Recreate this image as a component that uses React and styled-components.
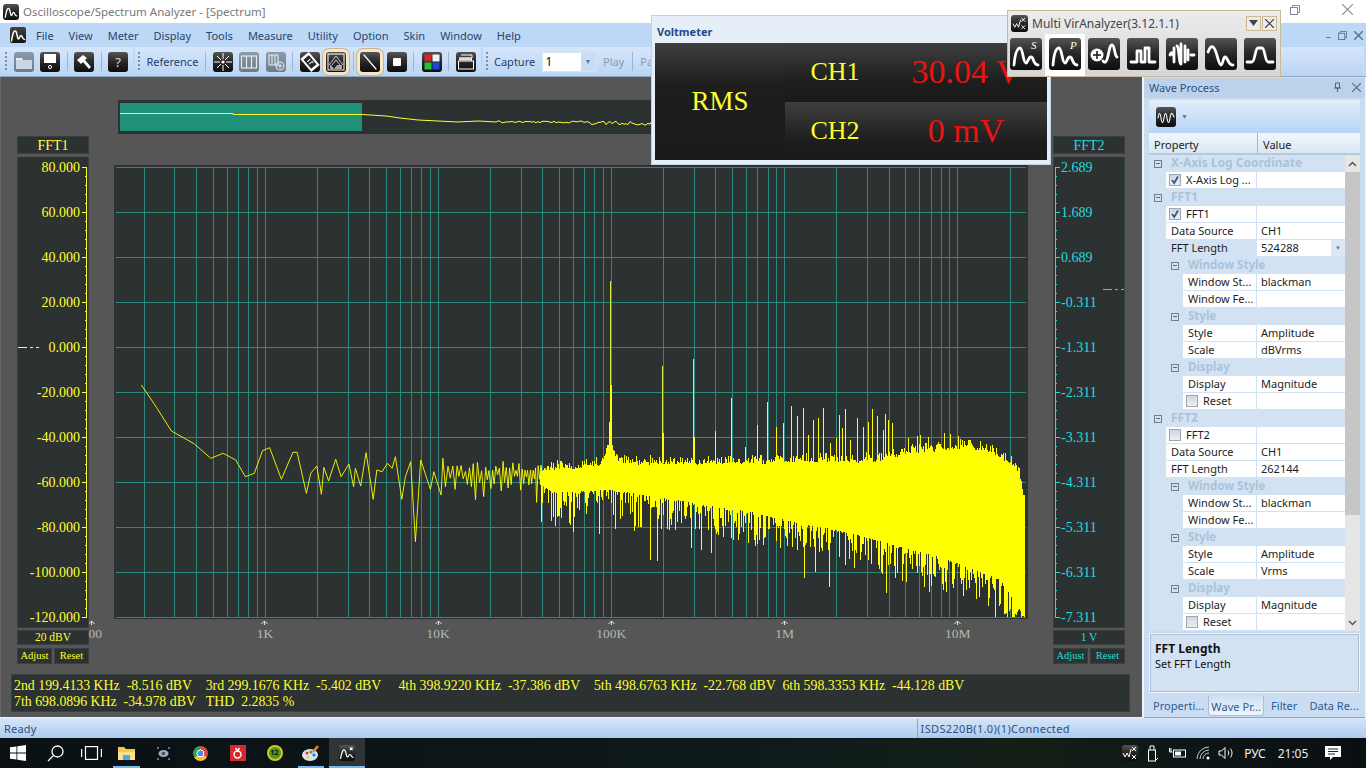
import React, { useMemo } from "react";
import styled, { createGlobalStyle } from "styled-components";

const Global = createGlobalStyle`
  html, body { margin: 0; padding: 0; background: #fff; }
  #root { width: 1366px; height: 768px; overflow: hidden; }
  * { box-sizing: border-box; }
`;

const UI = `"Noto Sans", "Liberation Sans", sans-serif`;
const SERIF = `"Liberation Serif", serif`;

/* ---------- frame ---------- */
const Page = styled.div`
  position: relative;
  width: 1366px;
  height: 768px;
  display: flex;
  flex-direction: column;
  overflow: hidden;
  font-family: ${UI};
  font-size: 11px;
`;
const TitleBar = styled.div`
  height: 23px;
  display: flex;
  align-items: center;
  background: #fff;
  padding: 0 13px 0 3px;
  color: #787878;
  font-size: 11.5px;
  gap: 4px;
`;
const WindowControls = styled.div`
  margin-left: auto;
  display: flex;
  gap: 42px;
  align-items: center;
  color: #8a8a8a;
  margin-top: -4px;
`;
const MenuBar = styled.div`
  height: 24px;
  display: flex;
  align-items: center;
  background: #bdd7f6;
  padding-left: 10px;
  color: #24466f;
`;
const MenuLogo = styled.div`
  width: 16px;
  height: 16px;
  margin-right: 10px;
  border-radius: 2px;
  background: linear-gradient(#444, #111);
  display: flex;
`;
const MenuItems = styled.div`
  display: flex;
  gap: 15px;
`;
const MenuItem = styled.span``;
const MdiControls = styled.div`
  margin-left: auto;
  display: flex;
  gap: 7px;
  align-items: center;
  padding-right: 3px;
  color: #5f7088;
`;
const ToolBar = styled.div`
  height: 30px;
  display: flex;
  background: #bdd7f6;
  border-bottom: 1px solid #8fa7c0;
`;
const Band = styled.div`
  display: flex;
  align-items: center;
  gap: 6.5px;
  padding: 0 ${(p) => p.$right ?? 5}px 0 ${(p) => p.$left ?? 3}px;
  margin-right: 2px;
  background: linear-gradient(#d6e6fa, #c5dcf7 60%, #b9d4f4);
  border-radius: 0 0 3px 3px;
  color: #1d3f6e;
  flex: ${(p) => (p.$grow ? 1 : "none")};
`;
const Grip = styled.i`
  width: 2px;
  height: 20px;
  background: repeating-linear-gradient(#6f90b8 0 2px, transparent 2px 4px);
`;
const Sep = styled.i`
  width: 1px;
  height: 19px;
  background: #9db6d2;
  margin: ${(p) => p.$margin || "0"};
`;
const Tile = styled.div`
  position: relative;
  width: ${(p) => p.$size || 20}px;
  height: ${(p) => p.$size || 20}px;
  flex: none;
  border-radius: 3px;
  background: ${(p) =>
    p.$off ? "linear-gradient(#8c9aa9, #6d7a88)" : "linear-gradient(#555 0%, #2a2a2a 45%, #0c0c0c 100%)"};
  box-shadow: ${(p) => (p.$active ? "0 0 0 3px #f6e6c8, 0 0 0 4px #cbb68f" : "none")};
  color: #fff;
  display: flex;
  align-items: center;
  justify-content: center;
  svg { display: block; }
`;
const TileHelp = styled.span`
  font-size: 13px;
  color: #ddd;
`;
const ToolLabel = styled.span`
  width: ${(p) => p.$w}px;
  white-space: nowrap;
`;
const Combo = styled.div`
  width: 55px;
  height: 20px;
  background: #fff;
  border: 1px solid #d5e3f4;
  display: flex;
  align-items: center;
  justify-content: space-between;
  padding-left: 3px;
  color: #111;
  font-size: 12px;
`;
const ComboArrow = styled.div`
  width: 15px;
  height: 100%;
  background: #c9dcf3;
  display: flex;
  align-items: center;
  justify-content: center;
  color: #5d7ba0;
  font-size: 7px;
`;
const DimLabel = styled.span`
  color: #8c9bad;
`;

/* ---------- workspace ---------- */
const Workspace = styled.div`
  height: 641px;
  display: flex;
  background: #eef4fb;
`;
const Main = styled.div`
  width: 1142px;
  height: 640px;
  background: #565656;
  border-left: 1px solid #6a6a6a;
  padding: 23px 12px 0 10px;
`;
const Minimap = styled.div`
  margin-left: 107px;
  width: 912px;
  height: 34px;
  background: #2c3132;
  svg { display: block; }
`;
const ChartGrid = styled.div`
  display: grid;
  grid-template-columns: 72px 914px 72px;
  column-gap: 25px;
  margin: 2px 5px 0 6px;
`;
const AxisColumn = styled.div`
  position: relative;
  z-index: 1;
  display: flex;
  flex-direction: column;
`;
const Dark = styled.div`
  background: #2c3132;
  border: 1px solid #3a3f40;
  color: ${(p) => p.$color};
  font-family: ${SERIF};
  text-align: center;
`;
const AxisTitle = styled(Dark)`
  height: 18px;
  line-height: 17px;
  font-size: 14px;
  margin-bottom: 3px;
`;
const Scale = styled(Dark)`
  position: relative;
  height: 471px;
  display: flex;
  flex-direction: ${(p) => (p.$right ? "row-reverse" : "row")};
  border-top-color: #2c3132;
  overflow: hidden;
`;
const ScaleLabels = styled.div`
  flex: 1;
  display: flex;
  flex-direction: column;
  gap: 25px;
  padding: ${(p) => (p.$right ? "0 0 0 1px" : "0 2px 0 0")};
  text-align: ${(p) => (p.$right ? "left" : "right")};
  font-size: 14px;
`;
const ScaleLabel = styled.div`
  height: 20px;
  line-height: 20px;
  white-space: nowrap;
`;
const ScaleMarker = styled.div`
  position: absolute;
  top: ${(p) => p.$top}px;
  ${(p) => (p.$right ? "right: 0" : "left: 0")};
  width: 21px;
  height: 1px;
  background: linear-gradient(90deg, ${(p) => p.$color} 0 9px, transparent 9px 12px, ${(p) => p.$color} 12px 15px, transparent 15px 18px, ${(p) => p.$color} 18px 21px);
`;
const Unit = styled(Dark)`
  height: 15px;
  line-height: 13px;
  font-size: 11.5px;
  margin: 2px 0 3px;
`;
const AxisButtons = styled.div`
  display: flex;
  justify-content: space-between;
`;
const AxisButton = styled(Dark)`
  width: 35px;
  height: 16px;
  line-height: 14px;
  font-size: 10.5px;
`;
const PlotColumn = styled.div`
  padding-top: 29px;
`;
const PlotFrame = styled.div`
  height: 454px;
  background: #2c3132;
  svg { display: block; }
`;
const XAxis = styled.div`
  display: flex;
  margin-left: -108.8px;
`;
const XCell = styled.div`
  width: 173.2px;
  flex: none;
  display: flex;
  flex-direction: column;
  align-items: center;
  color: #b4b8b4;
  font-family: ${SERIF};
  font-size: 13.5px;
  line-height: 15px;
  svg { display: block; margin: 1px 0 1px; }
`;
const InfoBox = styled.div`
  margin-top: 10px;
  height: 38px;
  background: #2c3132;
  border: 1px solid #3a3f40;
  padding: 3px 2px;
  color: #ffff2e;
  font-family: ${SERIF};
  font-size: 13.85px;
  line-height: 16px;
  white-space: pre;
`;

/* ---------- side panel ---------- */
const Side = styled.div`
  width: 221px;
  margin-left: 2px;
  background: #cadcf1;
  display: flex;
  flex-direction: column;
  padding: 1px 5px 0 5px;
  border-bottom: 1px solid #8fa7c0;
`;
const SideTitle = styled.div`
  height: 20px;
  margin: 0 -5px;
  padding: 0 4px 2px 5px;
  display: flex;
  align-items: center;
  justify-content: space-between;
  background: #bcd2ea;
  color: #2c4f80;
`;
const SideButtons = styled.div`
  display: flex;
  gap: 10px;
  align-items: center;
  color: #567;
`;
const SideTools = styled.div`
  height: 33px;
  margin-top: 2px;
  padding: 0 7px;
  display: flex;
  align-items: center;
  gap: 5px;
  background: linear-gradient(#e2eefb, #b7d4f5);
  color: #5d7ba0;
  font-size: 7px;
`;
const GridHead = styled.div`
  height: 22px;
  display: grid;
  grid-template-columns: 108px 1fr;
  background: linear-gradient(#f2f7fc, #d9e6f4);
  border-bottom: 2px solid #b5c9de;
  color: #222;
`;
const HeadCell = styled.div`
  display: flex;
  align-items: center;
  padding-left: 5px;
  padding-top: 2px;
  & + & { border-left: 1px solid #9fb6cf; }
`;
const GridBody = styled.div`
  display: flex;
  height: 476px;
  background: #d3e2f2;
`;
const GridRows = styled.div`
  width: 196px;
`;
const RowBox = styled.div`
  height: 17px;
  display: grid;
  grid-template-columns: 107px 1fr;
  color: #1d1d1d;
  line-height: 16px;
`;
const NameCell = styled.div`
  margin-left: ${(p) => p.$level * 17}px;
  background: ${(p) => (p.$selected ? "#d3e2f2" : "#fff")};
  border-bottom: 1px solid #d3e2f2;
  padding-left: 5px;
  display: flex;
  align-items: center;
  gap: 5px;
  white-space: nowrap;
  overflow: hidden;
`;
const ValueCell = styled.div`
  background: #fff;
  border-left: 1px solid #d3e2f2;
  border-bottom: 1px solid #d3e2f2;
  padding-left: 4px;
  display: flex;
  align-items: center;
  justify-content: space-between;
`;
const ValueDrop = styled.div`
  width: 14px;
  height: 16px;
  background: #dce8f6;
  color: #5d7ba0;
  font-size: 6px;
  display: flex;
  align-items: center;
  justify-content: center;
`;
const GroupRow = styled.div`
  height: 17px;
  display: flex;
  align-items: center;
  padding: 0 0 2px ${(p) => 5 + p.$level * 17}px;
  gap: 9px;
  background: #d3e2f2;
  color: #a9c3dc;
  font-weight: 700;
  font-size: ${(p) => (p.$level ? 11.5 : 12)}px;
  white-space: nowrap;
`;
const Minus = styled.span`
  position: relative;
  width: 8px;
  height: 8px;
  flex: none;
  margin-top: 2px;
  border: 1px solid #6f7f8f;
  &::after {
    content: "";
    position: absolute;
    left: 1px;
    right: 1px;
    top: 2px;
    height: 1px;
    background: #5b6875;
  }
`;
const Check = styled.span`
  width: 12px;
  height: 12px;
  flex: none;
  margin-left: -2px;
  border: 1px solid #9aa8b6;
  background: linear-gradient(#cfd6de, #eceff3);
  display: flex;
  align-items: center;
  justify-content: center;
  svg { display: block; }
`;
const ScrollBar = styled.div`
  width: 15px;
  background: #e6e6e6;
  display: flex;
  flex-direction: column;
  align-items: center;
  color: #555;
`;
const ScrollButton = styled.div`
  height: 17px;
  display: flex;
  align-items: center;
  justify-content: center;
`;
const ScrollThumb = styled.div`
  width: 100%;
  height: 343px;
  background: #c6c6c6;
`;
const ScrollRest = styled.div`
  flex: 1;
`;
const Description = styled.div`
  height: 60px;
  margin-top: 2px;
  border: 1px solid #eef4fa;
  background: #d3e2f2;
  box-shadow: inset 0 0 0 1px #a9c0d8;
  padding: 7px 5px;
  color: #111;
  line-height: 15px;
`;
const DescTitle = styled.div`
  font-weight: 700;
  font-size: 12px;
`;
const Tabs = styled.div`
  margin: 1px 0 0 -1px;
  height: 22px;
  display: flex;
  align-items: center;
  color: #2f5d90;
  letter-spacing: 0.05px;
`;
const Tab = styled.div`
  height: 21px;
  line-height: 22px;
  padding: 0 ${(p) => (p.$active ? 2 : 0)}px;
  margin: ${(p) => p.$margin || "0"};
  white-space: nowrap;
  ${(p) =>
    p.$active &&
    `background: linear-gradient(#cfe0f3,#eef5fc); border: 1px solid #a9c0d8; border-top-color:#cadcf1; border-radius: 0 0 4px 4px;`}
`;

/* ---------- status + taskbar ---------- */
const StatusBar = styled.div`
  height: 20px;
  display: flex;
  align-items: center;
  background: linear-gradient(#d7e6f8, #adcbef);
  color: #2e4f83;
  padding: 1px 0 0 4px;
  letter-spacing: 0.2px;
`;
const StatusRight = styled.div`
  margin-left: 880px;
  padding-left: 3px;
  height: 100%;
  display: flex;
  align-items: center;
  letter-spacing: 0.35px;
  border-left: 1px solid #8aa6c8;
`;
const TaskBar = styled.div`
  height: 30px;
  display: flex;
  align-items: center;
  background: linear-gradient(90deg, #0a1114 0%, #0c1518 35%, #0f1c1b 60%, #131f16 75%, #0c1416 90%, #0a0f12 100%);
  color: #eee;
  position: relative;
`;
const TaskSlot = styled.div`
  position: relative;
  width: ${(p) => p.$w || 37}px;
  height: 30px;
  flex: none;
  display: flex;
  align-items: center;
  justify-content: center;
  background: ${(p) => (p.$active ? "#2f3436" : "transparent")};
  ${(p) =>
    p.$open &&
    `&::after{content:"";position:absolute;left:${p.$active ? 0 : 5}px;right:${p.$active ? 0 : 5}px;bottom:0;height:2px;background:#76b9ed;}`}
  svg { display: block; }
`;
const Chrome = styled.div`
  width: 15px;
  height: 15px;
  border-radius: 50%;
  background: radial-gradient(circle, #4a8af4 0 3px, #fff 3px 4px, transparent 4px),
    conic-gradient(#e04a3b 0 33%, #f6c423 33% 66%, #2fa551 66%);
`;
const RedApp = styled.div`
  width: 16px;
  height: 16px;
  background: #d42b2f;
  display: flex;
  align-items: center;
  justify-content: center;
`;
const GreenBadge = styled.div`
  width: 16px;
  height: 16px;
  border-radius: 50%;
  background: #4a9a22;
  border: 2px solid #d9c726;
  color: #111;
  font-size: 7px;
  font-weight: 700;
  line-height: 12px;
  text-align: center;
`;
const Tray = styled.div`
  margin-left: auto;
  display: flex;
  align-items: center;
  height: 30px;
  font-size: 12px;
`;
const TrayItem = styled.div`
  width: ${(p) => p.$w}px;
  display: flex;
  align-items: center;
  justify-content: center;
  svg { display: block; }
`;

/* ---------- floating windows ---------- */
const Voltmeter = styled.div`
  position: absolute;
  left: 651px;
  top: 15px;
  width: 400px;
  height: 150px;
  background: #e6eff8;
  border: 1px solid #c0d2e6;
  padding: 3px 3px 4px;
  display: flex;
  flex-direction: column;
  z-index: 3;
`;
const VoltTitle = styled.div`
  height: 24px;
  display: flex;
  align-items: center;
  padding-left: 2px;
  color: #1f4a8a;
  font-weight: 700;
  font-size: 11px;
`;
const VoltGrid = styled.div`
  flex: 1;
  display: grid;
  grid-template-columns: 130px 100px 1fr;
  grid-template-rows: 59px 1fr;
  font-family: ${SERIF};
`;
const VoltCell = styled.div`
  grid-row: ${(p) => (p.$span ? "1 / span 2" : "auto")};
  display: flex;
  align-items: center;
  justify-content: center;
  padding-bottom: ${(p) => (p.$first ? 2 : 0)}px;
  background: linear-gradient(#3f3f3f 0%, #1e1e1e ${(p) => (p.$span ? "35%" : "65%")}, #1a1a1a 100%);
  color: ${(p) => p.$color};
  font-size: ${(p) => p.$size}px;
  white-space: nowrap;
`;
const Analyzer = styled.div`
  position: absolute;
  left: 1007px;
  top: 10px;
  width: 274px;
  height: 67px;
  border: 1px solid #c9b994;
  background: linear-gradient(#ececec, #d6d6d6);
  z-index: 4;
  display: flex;
  flex-direction: column;
`;
const AnalyzerTitle = styled.div`
  height: 24px;
  display: flex;
  align-items: center;
  gap: 4px;
  padding: 0 3px;
  color: #444;
  font-size: 12px;
`;
const AnalyzerButtons = styled.div`
  margin-left: auto;
  display: flex;
  gap: 1px;
`;
const AnalyzerButton = styled.div`
  width: 15px;
  height: 15px;
  background: #ececec;
  border: 1px solid #c9b994;
  display: flex;
  align-items: center;
  justify-content: center;
  svg { display: block; }
`;
const AnalyzerIcons = styled.div`
  display: flex;
  justify-content: space-between;
  padding: 3px 4px 0 2px;
`;
const AnalyzerSlot = styled.div`
  position: relative;
  width: 32px;
  height: 33px;
  &::before {
    content: "";
    display: ${(p) => (p.$active ? "block" : "none")};
    position: absolute;
    inset: -4px -4px -5px -4px;
    background: #fff;
  }
`;

/* ---------- data ---------- */
const Y_LEFT = ["80.000","60.000","40.000","20.000","0.000","-20.000","-40.000","-60.000","-80.000","-100.000","-120.000"];
const Y_RIGHT = ["2.689","1.689","0.689","-0.311","-1.311","-2.311","-3.311","-4.311","-5.311","-6.311","-7.311"];
const MENU = ["File","View","Meter","Display","Tools","Measure","Utility","Option","Skin","Window","Help"];
const XLAB = ["100","1K","10K","100K","1M","10M"];

const fftGroup = (name, checked, len, scale, selected) => [
  { t: "g", l: 0, n: name },
  { t: "c", l: 1, n: name, on: checked },
  { t: "p", l: 1, n: "Data Source", v: "CH1" },
  { t: "p", l: 1, n: "FFT Length", v: len, sel: selected },
  { t: "g", l: 1, n: "Window Style" },
  { t: "p", l: 2, n: "Window St...", v: "blackman" },
  { t: "p", l: 2, n: "Window Fe...", v: "" },
  { t: "g", l: 1, n: "Style" },
  { t: "p", l: 2, n: "Style", v: "Amplitude" },
  { t: "p", l: 2, n: "Scale", v: scale },
  { t: "g", l: 1, n: "Display" },
  { t: "p", l: 2, n: "Display", v: "Magnitude" },
  { t: "c", l: 2, n: "Reset", on: false },
];
const ROWS = [
  { t: "g", l: 0, n: "X-Axis Log Coordinate" },
  { t: "c", l: 1, n: "X-Axis Log ...", on: true },
  ...fftGroup("FFT1", true, "524288", "dBVrms", true),
  ...fftGroup("FFT2", false, "262144", "Vrms", false),
];

/* ---------- chart ---------- */
const xOf = (f) => 265 + 173.1 * Math.log10(f / 1000);
function rngFrom(seed) {
  let a = seed;
  return () => {
    a |= 0; a = (a + 0x6d2b79f5) | 0;
    let t = Math.imul(a ^ (a >>> 15), 1 | a);
    t = (t + Math.imul(t ^ (t >>> 7), 61 | t)) ^ t;
    return ((t ^ (t >>> 14)) >>> 0) / 4294967296;
  };
}
const lerpTable = (tb, x) => {
  if (x <= tb[0][0]) return tb[0][1];
  for (let i = 1; i < tb.length; i++) {
    if (x <= tb[i][0]) {
      const [a, b] = tb[i - 1];
      const [c, d] = tb[i];
      return b + ((d - b) * (x - a)) / (c - a);
    }
  }
  return tb[tb.length - 1][1];
};
const LOW = [[116,75],[130,97],[160,145],[200,213],[215,222],[240,237],[265,252],[310,295],[345,280],[380,300],[407,350],[432,340],[455,272],[475,263],[508,358],[540,277],[552,277],[578,400],[590,340],[607,318],[620,403],[627,322],[640,363],[660,298],[675,350],[697,312],[710,380],[715,325],[730,378],[745,278],[765,418],[775,330],[790,335],[805,310],[818,325],[827,290],[845,418],[855,350],[870,305],[883,545],[898,300],[925,388],[935,335],[955,405],[960,295]]
  .map(([X, Y]) => [100 + X / 2.8, 360 + Y / 3]);
const TOP = [[540,472],[552,468],[600,465],[606,452],[612,446],[618,462],[700,463],[800,461],[880,460],[905,452],[960,447],[985,449],[1000,456],[1012,463],[1018,472],[1024,498]];
const BOT = [[540,484],[552,492],[610,490],[625,492],[700,504],[750,512],[800,523],[850,533],[900,547],[950,560],[1000,580],[1015,603],[1024,617]];
const SPIKES = [[662,366],[693,359],[715,431],[731,398],[745,447],[757,425],[767,402],[776,427],[783,423],[791,406],[797,416],[803,408],[808,435],[813,420],[818,418],[823,408],[830,443],[836,438],[839,415],[842,428],[845,409],[850,440],[857,418],[863,427],[868,422],[872,409],[877,416],[883,430],[885,414],[888,420],[892,423],[908,438],[917,436],[920,435],[928,437],[944,433],[950,434],[958,436],[968,440]];
const DOWN = [[541,522],[555,526],[573,532],[599,534],[615,529],[634,531],[650,560],[657,561],[691,548],[701,550],[711,553],[804,578],[815,572],[829,587],[839,557],[886,593],[895,578],[917,573],[929,592],[943,590],[952,584],[963,596],[989,598],[995,617],[1007,617],[1013,617]];

function buildSpectrum() {
  const r = rngFrom(20513);
  let trace = "M" + LOW.map((p) => `${p[0].toFixed(1)} ${p[1].toFixed(1)}`).join("L");
  let x = LOW[LOW.length - 1][0];
  let up = false;
  while (x < 545) {
    const k = (x - 443) / 109;
    x += 2 - 1.2 * k + r() * 0.6;
    const y = up
      ? 460 + r() * (13 - 3 * k)
      : 474 + Math.pow(r(), 1.6) * 30;
    trace += `L${x.toFixed(1)} ${y.toFixed(1)}`;
    up = !up;
  }
  let band = "";
  for (let px = 540; px <= 1024; px += 1) {
    const t = lerpTable(TOP, px) - Math.pow(r(), 2) * 9 + r() * 2.5;
    const b = Math.min(617, lerpTable(BOT, px) + Math.pow(r(), 2.6) * 34);
    band += `M${px}.5 ${t.toFixed(0)}V${b.toFixed(0)}`;
  }
  let deep = "";
  DOWN.forEach(([a, y]) => { deep += `M${a}.5 480V${y}`; });
  let spikes = "";
  SPIKES.forEach(([a, y]) => { spikes += `M${a}.5 470V${y}`; });
  return { trace, band, deep, spikes };
}

function Plot() {
  const { trace, band, deep, spikes } = useMemo(buildSpectrum, []);
  const hs = Array.from({ length: 11 }, (_, i) => 167 + i * 45);
  const vs = [];
  [100, 1000, 10000, 100000, 1000000, 10000000].forEach((d) => {
    for (let m = 1; m < 10; m++) {
      const f = d * m;
      if (f >= 200 && f <= 2e7) vs.push(Math.round(xOf(f)));
    }
  });
  return (
    <svg width="914" height="454" viewBox="114 165 914 454">
      <g stroke="#2c897f" strokeWidth="1" shapeRendering="crispEdges">
        {hs.map((y) => <line key={y} x1="116" x2="1026" y1={y + 0.5} y2={y + 0.5} />)}
        {vs.map((x) => <line key={x} x1={x + 0.5} x2={x + 0.5} y1="167" y2="617.5" />)}
      </g>
      <path d={trace} fill="none" stroke="#ffff00" strokeWidth="0.9" />
      <path d={band} fill="none" stroke="#ffff00" strokeWidth="1" shapeRendering="crispEdges" />
      <path d={deep} fill="none" stroke="#ffff00" strokeWidth="1" shapeRendering="crispEdges" />
      <path d={spikes} fill="none" stroke="#ffff00" strokeWidth="1" shapeRendering="crispEdges" />
      <g fill="#ffff00" shapeRendering="crispEdges">
        <rect x="610" y="281" width="1" height="105" fill="#d8f040" />
        <rect x="610" y="385" width="2" height="40" />
        <rect x="609" y="422" width="3" height="30" />
        <rect x="607" y="445" width="6" height="20" />
        <rect x="662" y="366" width="1" height="68" fill="#d8f040" />
        <rect x="662" y="433" width="2" height="30" />
        <rect x="693" y="359" width="1" height="78" fill="#d8f040" />
        <rect x="693" y="437" width="2" height="26" />
      </g>
    </svg>
  );
}

function Ruler({ color, right }) {
  const ticks = [];
  for (let i = 0; i <= 50; i++) {
    const y = 9.5 + i * 9;
    const major = i % 5 === 0;
    ticks.push(
      <line
        key={i}
        x1={right ? 1 : major ? 0 : 3}
        x2={right ? (major ? 6 : 3) : 5}
        y1={y}
        y2={y}
        stroke={color}
      />
    );
  }
  return (
    <svg width="6" height="471" shapeRendering="crispEdges" style={{ flex: "none" }}>
      <line x1={right ? 1.5 : 4.5} x2={right ? 1.5 : 4.5} y1="9" y2="460" stroke={color} />
      {ticks}
    </svg>
  );
}

function MiniTrace() {
  const d = useMemo(() => {
    const r = rngFrom(7);
    let s = "M2 13.5H115V14.5H244L252 15L268 16L282 18L300 20L320 21L340 22L360 21L378 22";
    for (let x = 380; x < 540; x += 2) {
      s += `L${x} ${22 + r() * (x > 470 ? 4 : 2) - 1}`;
    }
    return s;
  }, []);
  return (
    <svg width="912" height="34">
      <rect x="2" y="3" width="242" height="28" fill="#1f9179" />
      <path d={d} fill="none" stroke="#ffff30" strokeWidth="1" />
    </svg>
  );
}

/* ---------- icons ---------- */
const W = ({ d, size = 20, sw = 1.6 }) => (
  <svg width={size} height={size} viewBox="0 0 20 20" fill="none" stroke="#fff" strokeWidth={sw} strokeLinecap="round" strokeLinejoin="round">
    <path d={d} />
  </svg>
);
const FolderIcon = () => (
  <svg width="20" height="20" viewBox="0 0 20 20"><path d="M2 6h6l1 2h9v9H2z" fill="#c9d5e2" /><path d="M2 6h6l1 2H2z" fill="#e6edf4" /></svg>
);
const SaveIcon = () => (
  <svg width="20" height="20" viewBox="0 0 20 20"><rect x="4" y="2" width="12" height="9" fill="#fff" /><circle cx="10" cy="15" r="1.6" fill="none" stroke="#fff" /></svg>
);
const HammerIcon = () => (
  <svg width="20" height="20" viewBox="0 0 20 20"><path d="M3 8l6-5 4 3-2 2 6 7-2 2-6-7-2 2z" fill="#fff" /></svg>
);
const StarIcon = () => (
  <svg width="20" height="20" viewBox="0 0 20 20" stroke="#fff" strokeWidth="1" fill="#fff"><path d="M10 1v6M10 13v6M1 10h6M13 10h6M4 4l4 4M16 4l-4 4M4 16l4-4M16 16l-4-4" /><circle cx="10" cy="10" r="1.6" stroke="none" /></svg>
);
const ColumnsIcon = () => (
  <svg width="20" height="20" viewBox="0 0 20 20" fill="none" stroke="#e4ebf2" strokeWidth="1.2"><rect x="2.5" y="4" width="15" height="12" /><path d="M7.5 4v12M12.5 4v12" /></svg>
);
const ColumnsPlusIcon = () => (
  <svg width="20" height="20" viewBox="0 0 20 20" fill="none" stroke="#e4ebf2" strokeWidth="1.1"><path d="M3 3h9v10H3zM6 3v10M9 3v10" /><circle cx="14" cy="14" r="4" /><path d="M14 11.5v5M11.5 14h5" /></svg>
);
const CardIcon = () => (
  <svg width="20" height="20" viewBox="0 0 20 20"><g transform="rotate(-40 10 10)"><rect x="4.5" y="1.5" width="11" height="17" fill="#fff" /><rect x="6.5" y="4" width="7" height="12" fill="#222" /><path d="M8 8h4M8 11h4v2" stroke="#fff" fill="none" /></g></svg>
);
const GridZoomIcon = () => (
  <svg width="20" height="20" viewBox="0 0 20 20"><rect x="2" y="2" width="16" height="16" fill="none" stroke="#fff" /><path d="M3 13L10 4l7 9M6 13l4-5 4 5" stroke="#ccc" fill="none" /><rect x="4" y="13" width="12" height="4" fill="#aaa" /><path d="M5 13l3 4 3-4z" fill="#222" /></svg>
);
const LineIcon = () => <W d="M4 3l12 14" sw={1.2} />;
const SquareIcon = () => <svg width="20" height="20"><rect x="6" y="6" width="8" height="8" fill="#fff" rx="1" /></svg>;
const RgbIcon = () => (
  <svg width="20" height="20"><rect x="2.5" y="2.5" width="7" height="7" fill="#d8232a" /><rect x="10.5" y="2.5" width="7" height="7" fill="#f2f2f2" /><rect x="2.5" y="10.5" width="7" height="7" fill="#22c432" /><rect x="10.5" y="10.5" width="7" height="7" fill="#1c46e0" /></svg>
);
const StackIcon = () => (
  <svg width="20" height="20" viewBox="0 0 20 20" fill="none" stroke="#fff"><path d="M5 3h11v3M3.500 6h12v3" /><rect x="2.5" y="9" width="15" height="8" /><rect x="3" y="5.500" width="12" height="3" fill="#ddd" stroke="none" /></svg>
);
const Logo = ({ size = 16 }) => (
  <svg width={size} height={size} viewBox="0 0 32 32" fill="none" stroke="#fff" strokeWidth="3" strokeLinecap="round" strokeLinejoin="round">
    <path d="M3 28C6 8 9 6 12 9c3 4 2 15 5 15 2 0 2-7 5-7 3 0 2 8 7 8" />
  </svg>
);

const waves = {
  s: "M4 27C5 15 7 10 10 10c3 0 3 15 6 15 2 0 2-6 5-6 3 0 2 8 7 8",
  p: "M4 27C5 15 7 10 10 10c3 0 3 15 6 15 2 0 2-6 5-6 3 0 2 8 7 8",
  c: "M15 23c2 3 4 0 5-5s2-11 4-11c3 0 2 10 5 12",
  q: "M4 24h6V13h4v11h4V10h4v14h6",
  b: "M4 17c1-3 2-3 3 0M8 10v14M11 8c2 0 2 18 4 18M15 6v20M19 8v16M22 12v10M25 17h3",
  m: "M3 14c2-5 3-6 5-5 4 2 5 18 8 18 2 0 2-8 4-8 3 0 3 9 8 8",
  f: "M3 24h5c3 0 3-14 6-14h4c3 0 3 14 6 14h5",
};
const AnalyzerIcon = ({ kind, letter }) => (
  <svg width="32" height="33" viewBox="0 0 32 33" fill="none">
    <path d={waves[kind]} stroke="#fff" strokeWidth="2.8" strokeLinecap="round" strokeLinejoin="round" />
    {letter && (
      <text x="21" y="11" fill="#fff" fontSize="11" fontStyle="italic" fontFamily="Liberation Serif, serif">{letter}</text>
    )}
    {kind === "c" && (
      <g>
        <circle cx="9" cy="17" r="6.500" fill="#fff" />
        <path d="M5 17h8M9 13v8" stroke="#111" strokeWidth="1.500" />
      </g>
    )}
  </svg>
);
const CloseGlyph = ({ size = 10, color = "#8a8a8a", sw = 1 }) => (
  <svg width={size} height={size} viewBox="0 0 10 10" stroke={color} strokeWidth={sw} fill="none"><path d="M0 0l10 10M10 0L0 10" /></svg>
);
const RestoreGlyph = ({ size = 10, color = "#8a8a8a" }) => (
  <svg width={size} height={size} viewBox="0 0 10 10" stroke={color} fill="none"><rect x=".5" y="2.500" width="7" height="7" /><path d="M2.500 2.500V.5h7v7H7.500" /></svg>
);
const ScrollChevron = ({ down }) => (
  <svg width="9" height="6" viewBox="0 0 9 6" fill="none" stroke="#555" strokeWidth="1.500"><path d={down ? "M1 1l3.500 3.500L8 1" : "M1 5l3.500-3.500L8 5"} /></svg>
);
const CheckMark = () => (
  <svg width="10" height="10" viewBox="0 0 10 10" fill="none" stroke="#3b5a86" strokeWidth="1.800"><path d="M2 5l2.200 3L8 1.500" /></svg>
);
const XTick = () => (
  <svg width="7" height="5" viewBox="0 0 7 5" fill="none" stroke="#e2e2e2"><path d="M.5 4l3-3 3 3M3.500 1v4" /></svg>
);

const Row = ({ row }) => {
  if (row.t === "g")
    return (
      <GroupRow $level={row.l}><Minus /><span>{row.n}</span></GroupRow>
    );
  return (
    <RowBox>
      <NameCell $level={row.l} $selected={row.sel}>
        {row.t === "c" && <Check>{row.on && <CheckMark />}</Check>}
        <span>{row.n}</span>
      </NameCell>
      <ValueCell>
        <span>{row.v}</span>
        {row.sel && <ValueDrop>▼</ValueDrop>}
      </ValueCell>
    </RowBox>
  );
};

export default function App() {
  return (
    <>
      <Global />
      <Page>
        <TitleBar>
          <Tile $size={16}><Logo size={14} /></Tile>
          <span>Oscilloscope/Spectrum Analyzer - [Spectrum]</span>
          <WindowControls>
            <RestoreGlyph />
            <CloseGlyph size={11} />
          </WindowControls>
        </TitleBar>
        <MenuBar>
          <MenuLogo><Logo /></MenuLogo>
          <MenuItems>{MENU.map((m) => <MenuItem key={m}>{m}</MenuItem>)}</MenuItems>
          <MdiControls>
            <span>–</span>
            <RestoreGlyph size={9} color="#5f7088" />
            <CloseGlyph size={9} color="#5f7088" sw={1.6} />
          </MdiControls>
        </MenuBar>
        <ToolBar>
          <Band $left={5}>
            <Grip />
            <Tile $off><FolderIcon /></Tile>
            <Tile><SaveIcon /></Tile>
            <Sep />
            <Tile><HammerIcon /></Tile>
            <Sep />
            <Tile><TileHelp>?</TileHelp></Tile>
          </Band>
          <Band>
            <Grip />
            <ToolLabel $w={51}>Reference</ToolLabel>
            <Sep $margin="0 0 0 1px" />
            <Tile><StarIcon /></Tile>
            <Tile $off><ColumnsIcon /></Tile>
            <Tile $off><ColumnsPlusIcon /></Tile>
            <Sep />
            <Tile><CardIcon /></Tile>
            <Tile $active><GridZoomIcon /></Tile>
            <Sep />
            <Tile $active><LineIcon /></Tile>
            <Tile><SquareIcon /></Tile>
            <Sep $margin="0 1px 0 0" />
            <Tile><RgbIcon /></Tile>
            <Sep />
            <Tile><StackIcon /></Tile>
          </Band>
          <Band $grow>
            <Grip />
            <ToolLabel $w={41}>Capture</ToolLabel>
            <Combo>1<ComboArrow>▼</ComboArrow></Combo>
            <DimLabel>Play</DimLabel>
            <Sep $margin="0 1px" />
            <DimLabel>Pause</DimLabel>
          </Band>
        </ToolBar>
        <Workspace>
          <Main>
            <Minimap><MiniTrace /></Minimap>
            <ChartGrid>
              <AxisColumn>
                <AxisTitle $color="#ffff4a">FFT1</AxisTitle>
                <Scale $color="#ffff2e">
                  <ScaleLabels>{Y_LEFT.map((v) => <ScaleLabel key={v}>{v}</ScaleLabel>)}</ScaleLabels>
                  <Ruler color="#ffff2e" />
                  <ScaleMarker $top={189} $color="#ffff2e" />
                </Scale>
                <Unit $color="#ffff2e">20 dBV</Unit>
                <AxisButtons>
                  <AxisButton $color="#ffff2e">Adjust</AxisButton>
                  <AxisButton $color="#ffff2e">Reset</AxisButton>
                </AxisButtons>
              </AxisColumn>
              <PlotColumn>
                <PlotFrame><Plot /></PlotFrame>
                <XAxis>
                  {XLAB.map((l) => (
                    <XCell key={l}><XTick /><span>{l}</span></XCell>
                  ))}
                </XAxis>
              </PlotColumn>
              <AxisColumn>
                <AxisTitle $color="#25dcdc">FFT2</AxisTitle>
                <Scale $color="#25dcdc" $right>
                  <ScaleLabels $right>{Y_RIGHT.map((v) => <ScaleLabel key={v}>{v}</ScaleLabel>)}</ScaleLabels>
                  <Ruler color="#25dcdc" right />
                  <ScaleMarker $top={131} $right $color="#25dcdc" />
                </Scale>
                <Unit $color="#25dcdc">1 V</Unit>
                <AxisButtons>
                  <AxisButton $color="#25dcdc">Adjust</AxisButton>
                  <AxisButton $color="#25dcdc">Reset</AxisButton>
                </AxisButtons>
              </AxisColumn>
            </ChartGrid>
            <InfoBox>
              {"2nd 199.4133 KHz  -8.516 dBV    3rd 299.1676 KHz  -5.402 dBV     4th 398.9220 KHz  -37.386 dBV    5th 498.6763 KHz  -22.768 dBV  6th 598.3353 KHz  -44.128 dBV\n7th 698.0896 KHz  -34.978 dBV   THD  2.2835 %"}
            </InfoBox>
          </Main>
          <Side>
            <SideTitle>
              <span>Wave Process</span>
              <SideButtons>
                <svg width="9" height="10" viewBox="0 0 9 10" fill="none" stroke="#567"><path d="M2.500 1h4v5h-4zM1 6h7M4.500 6v4" /></svg>
                <CloseGlyph size={9} color="#567" sw={1.3} />
              </SideButtons>
            </SideTitle>
            <SideTools>
              <Tile>
                <W d="M2 11c1-6 2-6 3 0s2 6 3 0 2-6 3 0 2 6 3 0 2-6 4-1" sw={1.1} />
              </Tile>
              <span>▼</span>
            </SideTools>
            <GridHead>
              <HeadCell>Property</HeadCell>
              <HeadCell>Value</HeadCell>
            </GridHead>
            <GridBody>
              <GridRows>{ROWS.map((r, i) => <Row key={i} row={r} />)}</GridRows>
              <ScrollBar>
                <ScrollButton><ScrollChevron /></ScrollButton>
                <ScrollThumb />
                <ScrollRest />
                <ScrollButton><ScrollChevron down /></ScrollButton>
              </ScrollBar>
            </GridBody>
            <Description>
              <DescTitle>FFT Length</DescTitle>
              <div>Set FFT Length</div>
            </Description>
            <Tabs>
              <Tab $margin="0 0 0 5px">Properti...</Tab>
              <Tab $active $margin="0 0 0 4px">Wave Pr...</Tab>
              <Tab $margin="0 0 0 7px">Filter</Tab>
              <Tab $margin="0 0 0 12px">Data Re...</Tab>
            </Tabs>
          </Side>
        </Workspace>
        <StatusBar>
          <span>Ready</span>
          <StatusRight>ISDS220B(1.0)(1)Connected</StatusRight>
        </StatusBar>
        <TaskBar>
          <TaskSlot $w={36}>
            <svg width="16" height="16" viewBox="0 0 16 16" fill="#fff"><path d="M0 2.300l6.500-.9v6.200H0zM7.300 1.300L16 0v7.600H7.300zM0 8.400h6.500v6.200L0 13.700zM7.300 8.400H16V16l-8.700-1.200z" /></svg>
          </TaskSlot>
          <TaskSlot $w={38}>
            <svg width="17" height="17" viewBox="0 0 17 17" fill="none" stroke="#fff" strokeWidth="1.300"><circle cx="10.500" cy="6.500" r="5.500" /><path d="M6.500 10.500L1 16" /></svg>
          </TaskSlot>
          <TaskSlot $w={34}>
            <svg width="21" height="14" viewBox="0 0 21 14" fill="none" stroke="#fff" strokeWidth="1.200"><rect x="4.500" y=".6" width="12" height="12.800" /><path d="M.6 3v8M20.400 3v8" /></svg>
          </TaskSlot>
          <TaskSlot $w={37} $open>
            <svg width="17" height="15" viewBox="0 0 17 15"><path d="M0 1h6l2 2h9v11H0z" fill="#f5c94e" /><path d="M0 6h17v8H0z" fill="#fde08a" /><rect x="5" y="9" width="7" height="5" fill="#4aa9e6" /></svg>
          </TaskSlot>
          <TaskSlot $w={37}>
            <svg width="15" height="15" viewBox="0 0 15 15"><ellipse cx="7.500" cy="7.500" rx="5" ry="3.500" fill="#9db0c0" /><circle cx="7.500" cy="7.500" r="1.800" fill="#44525e" /><path d="M1 2h2M12 2h2M1 13h2M12 13h2" stroke="#ccd" /></svg>
          </TaskSlot>
          <TaskSlot $w={37}><Chrome /></TaskSlot>
          <TaskSlot $w={37}>
            <RedApp>
              <svg width="11" height="12" viewBox="0 0 11 12" fill="none" stroke="#fff" strokeWidth="1.400"><circle cx="5.500" cy="7.500" r="3.500" /><path d="M3.500 1l2 3 2-3" /></svg>
            </RedApp>
          </TaskSlot>
          <TaskSlot $w={37}><GreenBadge>12</GreenBadge></TaskSlot>
          <TaskSlot $w={36} $open>
            <svg width="19" height="17" viewBox="0 0 19 17"><ellipse cx="8" cy="10" rx="8" ry="6" fill="#d8e4ee" /><circle cx="5" cy="8" r="1.500" fill="#d33" /><circle cx="9" cy="7" r="1.500" fill="#3a3" /><circle cx="12" cy="10" r="1.500" fill="#36c" /><circle cx="6" cy="12" r="1.500" fill="#fc3" /><path d="M11 7l5-6" stroke="#e08a2a" strokeWidth="2.500" /></svg>
          </TaskSlot>
          <TaskSlot $w={36} $open $active>
            <Tile $size={16}>
              <svg width="16" height="16" viewBox="0 0 32 32" fill="none" stroke="#fff" strokeWidth="2.400"><path d="M3 28C6 10 9 8 12 11c3 4 2 13 5 13 2 0 2-5 5-5 3 0 2 6 7 6M22 5l5 5M27 5l-5 5" /></svg>
            </Tile>
          </TaskSlot>
          <Tray>
            <TrayItem $w={23}>
              <Tile $size={16}><svg width="16" height="16" viewBox="0 0 16 16" fill="none" stroke="#fff"><path d="M1 8l2 4 2-4 2 4 2-8M10 2l4 4M14 2l-4 4M10 10l4 4M14 10l-4 4" /></svg></Tile>
            </TrayItem>
            <TrayItem $w={24}>
              <svg width="12" height="17" viewBox="0 0 12 17" fill="none" stroke="#fff"><rect x="1.500" y="5" width="7" height="11" /><path d="M3 5V1h4v4M9 15l2-2" /></svg>
            </TrayItem>
            <TrayItem $w={25}>
              <svg width="17" height="12" viewBox="0 0 17 12" fill="none" stroke="#fff"><rect x="4.500" y="3" width="12" height="7" /><rect x="6" y="4.500" width="6" height="4" fill="#fff" stroke="none" /><path d="M.5 1v4h3M2 1v4" /></svg>
            </TrayItem>
            <TrayItem $w={25}>
              <svg width="14" height="14" viewBox="0 0 14 14" fill="none" stroke="#ccc"><path d="M1 13A12 12 0 0 1 13 1M4 13a9 9 0 0 1 9-9M7 13a6 6 0 0 1 6-6" /><circle cx="12" cy="12" r="1.500" fill="#fff" stroke="none" /></svg>
            </TrayItem>
            <TrayItem $w={21}>
              <svg width="16" height="14" viewBox="0 0 16 14" fill="none" stroke="#fff"><path d="M1 5h2.500L7 1.500v11L3.500 9H1zM10 4.500c1 1.500 1 3.500 0 5M12.500 2.500c2 3 2 6 0 9" /></svg>
            </TrayItem>
            <TrayItem $w={38}>РУС</TrayItem>
            <TrayItem $w={38}>21:05</TrayItem>
            <TrayItem $w={42}>
              <svg width="17" height="15" viewBox="0 0 17 15"><path d="M0 0h16v11h-8l-3 3v-3H0z" fill="#fff" /><path d="M3 3h10M3 5.500h10M3 8h7" stroke="#222" /></svg>
            </TrayItem>
            <TrayItem $w={12} />
          </Tray>
        </TaskBar>

        <Voltmeter>
          <VoltTitle>Voltmeter</VoltTitle>
          <VoltGrid>
            <VoltCell $span $color="#ffff2e" $size={27}>RMS</VoltCell>
            <VoltCell $first $color="#ffff2e" $size={26}>CH1</VoltCell>
            <VoltCell $first $color="#e81414" $size={34}>30.04 V</VoltCell>
            <VoltCell $color="#ffff2e" $size={26}>CH2</VoltCell>
            <VoltCell $color="#e81414" $size={34}>0 mV</VoltCell>
          </VoltGrid>
        </Voltmeter>

        <Analyzer>
          <AnalyzerTitle>
            <Tile $size={17}><svg width="15" height="15" viewBox="0 0 16 16" fill="none" stroke="#fff"><path d="M1 8l2 4 2-4 2 4 2-8M10 2l4 4M14 2l-4 4M10 10l4 4M14 10l-4 4" /></svg></Tile>
            <span>Multi VirAnalyzer(3.12.1.1)</span>
            <AnalyzerButtons>
              <AnalyzerButton><svg width="9" height="6"><path d="M0 0h9L4.500 6z" fill="#444" /></svg></AnalyzerButton>
              <AnalyzerButton><CloseGlyph size={9} color="#333" sw={1.3} /></AnalyzerButton>
            </AnalyzerButtons>
          </AnalyzerTitle>
          <AnalyzerIcons>
            {[["s","S"],["p","P",true],["c"],["q"],["b"],["m"],["f"]].map(([k, l, a]) => (
              <AnalyzerSlot key={k} $active={a}>
                <Tile $size={32}><AnalyzerIcon kind={k} letter={l} /></Tile>
              </AnalyzerSlot>
            ))}
          </AnalyzerIcons>
        </Analyzer>
      </Page>
    </>
  );
}
